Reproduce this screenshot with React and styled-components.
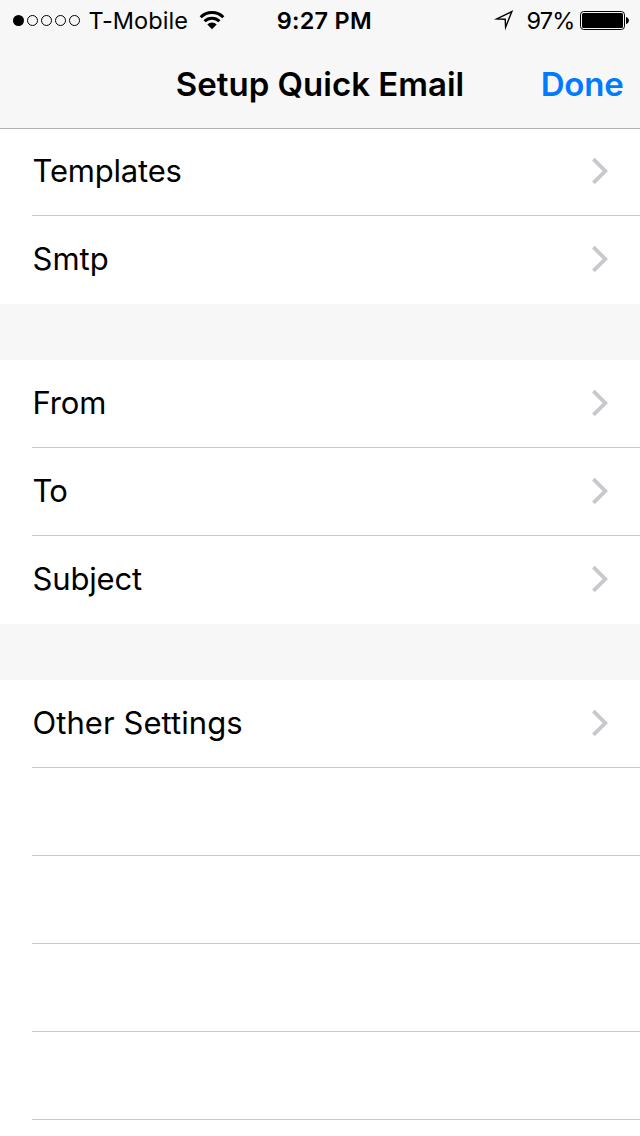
import React from 'react';
import styled, { createGlobalStyle } from 'styled-components';

const GlobalStyle = createGlobalStyle`
  * {
    box-sizing: border-box;
  }

  body {
    margin: 0;
    background: #ffffff;
    color: #000000;
    font-family: Inter, 'Liberation Sans', sans-serif;
  }
`;

const Screen = styled.div`
  width: 640px;
  height: 1136px;
  overflow: hidden;
  background: #ffffff;
`;

const Header = styled.header`
  position: relative;
  height: 128px;
  background: #f7f7f7;
  box-shadow: 0 1px 0 #b2b2b2;
`;

const StatusBar = styled.div`
  display: grid;
  grid-template-columns: 1fr auto 1fr;
  height: 40px;
  padding: 1px 11px 0 12px;
  font-size: 23.5px;
  line-height: 40px;
`;

const StatusGroup = styled.div`
  display: flex;
  align-items: center;
  height: 40px;
  justify-content: ${(props) => (props.$end ? 'flex-end' : 'flex-start')};
`;

const Carrier = styled.span`
  margin: 0 11.5px 0 7.5px;
  letter-spacing: 0.05px;
`;

const Clock = styled.span`
  padding-left: 7.5px;
  font-weight: 580;
  letter-spacing: 0.25px;
`;

const Percent = styled.span`
  margin: 0 5.5px 0 12px;
  letter-spacing: -0.8px;
`;

const NavBar = styled.div`
  display: grid;
  grid-template-columns: 1fr auto 1fr;
  align-items: center;
  height: 88px;
  padding: 0 16px;
`;

const Title = styled.h1`
  grid-column: 2;
  margin: 0;
  font-size: 33px;
  font-weight: 600;
  line-height: 88px;
  letter-spacing: 0;
`;

const DoneButton = styled.button`
  justify-self: end;
  padding: 0 0.5px 0 0;
  border: 0;
  background: none;
  color: #007aff;
  font-family: inherit;
  font-size: 33px;
  font-weight: 600;
  line-height: 88px;
  letter-spacing: -0.2px;
`;

const Section = styled.section`
  & + & {
    border-top: 56px solid #f7f7f7;
  }
`;

const Row = styled.div`
  display: flex;
  height: 88px;
  padding-left: 32px;
`;

const RowContent = styled.div`
  display: flex;
  flex: 1;
  align-items: center;
  justify-content: space-between;
  padding: 0 31px 2px 0;
  border-bottom: 1px solid ${(props) => (props.$line ? '#c8c7cc' : 'transparent')};
`;

const Label = styled.span`
  padding-left: 0.5px;
  font-size: 31px;
  line-height: 84px;
  letter-spacing: ${(props) => props.$spacing || 0}px;
`;

const SignalDots = () => (
  <svg width="69" height="14" viewBox="0 0 69 14">
    <circle cx="6.5" cy="6.5" r="5.5" />
    {[20.5, 34.5, 48.5, 62.5].map((x) => (
      <circle key={x} cx={x} cy="6.5" r="5" fill="none" stroke="#000" />
    ))}
  </svg>
);

const Wifi = () => (
  <svg width="26" height="20" viewBox="0 0 26 20">
    <g fill="none" stroke="#000" strokeWidth="3">
      <path d="M1.7 6.2a16 16 0 0 1 22.6 0" />
      <path d="M5.6 10.3a10.5 10.5 0 0 1 14.8 0" />
    </g>
    <path d="M13 18.2l-4.7-4.7a6.8 6.8 0 0 1 9.4 0z" />
  </svg>
);

const Location = () => (
  <svg width="21" height="24" viewBox="0 0 21 24">
    <path
      d="M3.8 9.9L18.9 2.5L12.6 18.2L12.2 10.2Z"
      fill="none"
      stroke="#000"
      strokeWidth="1.4"
      strokeMiterlimit="10"
    />
  </svg>
);

const Battery = () => (
  <svg width="49" height="20" viewBox="0 0 49 20">
    <rect x="0.5" y="0.5" width="44" height="18" rx="3.2" fill="none" stroke="#000" />
    <rect x="2" y="2" width="41" height="15" rx="1.5" />
    <path d="M46 6c3.9 1 3.9 6 0 7z" />
  </svg>
);

const Chevron = () => (
  <svg width="17" height="28" viewBox="0 0 17 28">
    <path d="M1.4 2.1L13.3 14L1.4 25.9" fill="none" stroke="#c7c7cc" strokeWidth="3.8" />
  </svg>
);

const sections = [
  [{ label: 'Templates', spacing: -0.2 }, { label: 'Smtp' }],
  [{ label: 'From', spacing: -0.1 }, { label: 'To', spacing: -0.8 }, { label: 'Subject', spacing: -0.15 }],
  [{ label: 'Other Settings', spacing: 0.06 }, {}, {}, {}, {}],
];

const App = () => {
  return (
    <Screen>
      <GlobalStyle />
      <Header>
        <StatusBar>
          <StatusGroup>
            <SignalDots />
            <Carrier>T-Mobile</Carrier>
            <Wifi />
          </StatusGroup>
          <Clock>9:27 PM</Clock>
          <StatusGroup $end>
            <Location />
            <Percent>97%</Percent>
            <Battery />
          </StatusGroup>
        </StatusBar>
        <NavBar>
          <Title>Setup Quick Email</Title>
          <DoneButton>Done</DoneButton>
        </NavBar>
      </Header>
      {sections.map((rows, s) => (
        <Section key={s}>
          {rows.map(({ label, spacing }, i) => (
            <Row key={i}>
              <RowContent $line={s === sections.length - 1 || i < rows.length - 1}>
                {label && <Label $spacing={spacing}>{label}</Label>}
                {label && <Chevron />}
              </RowContent>
            </Row>
          ))}
        </Section>
      ))}
    </Screen>
  );
};

export default App;
